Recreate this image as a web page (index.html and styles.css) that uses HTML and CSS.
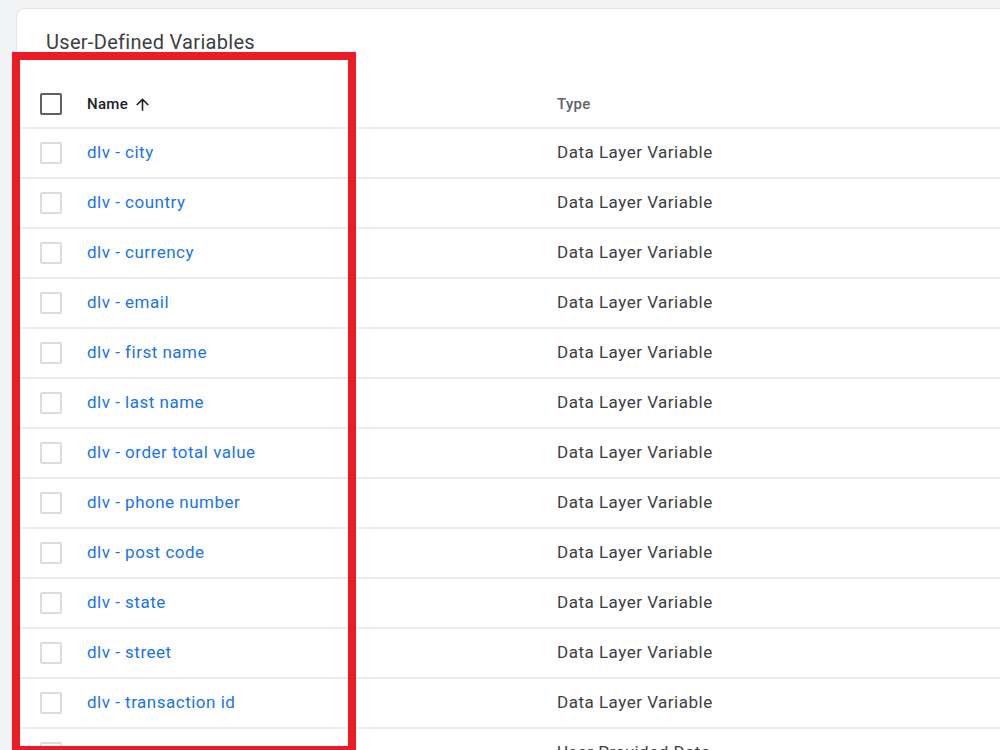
FILE: index.html
```html
<!DOCTYPE html>
<html lang="en">
<head>
  <meta charset="UTF-8">
  <title>User-Defined Variables</title>
  <link rel="stylesheet" href="styles.css">
</head>
<body>
  <div class="card">
    <div class="card-title">User-Defined Variables</div>
    <div class="table">
      <div class="row head">
        <div class="cell check"><span class="box dark"></span></div>
        <div class="cell name">Name
          <svg class="arrow" viewBox="0 0 24 24" width="19" height="19"><path d="M4 12l1.41 1.41L11 7.83V20h2V7.83l5.58 5.59L20 12l-8-8-8 8z" fill="#202124"/></svg>
        </div>
        <div class="cell type">Type</div>
      </div>
      <div class="row"><div class="cell check"><span class="box"></span></div><div class="cell name"><a>dlv - city</a></div><div class="cell type">Data Layer Variable</div></div>
      <div class="row"><div class="cell check"><span class="box"></span></div><div class="cell name"><a>dlv - country</a></div><div class="cell type">Data Layer Variable</div></div>
      <div class="row"><div class="cell check"><span class="box"></span></div><div class="cell name"><a>dlv - currency</a></div><div class="cell type">Data Layer Variable</div></div>
      <div class="row"><div class="cell check"><span class="box"></span></div><div class="cell name"><a>dlv - email</a></div><div class="cell type">Data Layer Variable</div></div>
      <div class="row"><div class="cell check"><span class="box"></span></div><div class="cell name"><a>dlv - first name</a></div><div class="cell type">Data Layer Variable</div></div>
      <div class="row"><div class="cell check"><span class="box"></span></div><div class="cell name"><a>dlv - last name</a></div><div class="cell type">Data Layer Variable</div></div>
      <div class="row"><div class="cell check"><span class="box"></span></div><div class="cell name"><a>dlv - order total value</a></div><div class="cell type">Data Layer Variable</div></div>
      <div class="row"><div class="cell check"><span class="box"></span></div><div class="cell name"><a>dlv - phone number</a></div><div class="cell type">Data Layer Variable</div></div>
      <div class="row"><div class="cell check"><span class="box"></span></div><div class="cell name"><a>dlv - post code</a></div><div class="cell type">Data Layer Variable</div></div>
      <div class="row"><div class="cell check"><span class="box"></span></div><div class="cell name"><a>dlv - state</a></div><div class="cell type">Data Layer Variable</div></div>
      <div class="row"><div class="cell check"><span class="box"></span></div><div class="cell name"><a>dlv - street</a></div><div class="cell type">Data Layer Variable</div></div>
      <div class="row"><div class="cell check"><span class="box"></span></div><div class="cell name"><a>dlv - transaction id</a></div><div class="cell type">Data Layer Variable</div></div>
      <div class="row"><div class="cell check"><span class="box"></span></div><div class="cell name"><a>User Provided Data</a></div><div class="cell type">User Provided Data</div></div>
    </div>
  </div>
  <div class="highlight"></div>
</body>
</html>
```

FILE: styles.css
```css
body {
  margin: 0;
  background: #f1f3f4;
  font-family: Roboto, "Liberation Sans", sans-serif;
  overflow: hidden;
  height: 750px;
}

.card {
  margin: 8px 0 0 16px;
  background: #fff;
  border: 1px solid #e3e5e8;
  border-right: none;
  border-radius: 8px 0 0 0;
  height: 900px;
}

.card-title {
  padding: 21px 0 0 29px;
  height: 49px;
  box-sizing: border-box;
  font-size: 20px;
  color: #3c4043;
  letter-spacing: 0.3px;
}

.table {
  margin-top: 23px;
}

.row {
  display: grid;
  grid-template-columns: 70px 470px 1fr;
  height: 50px;
  align-items: center;
  border-bottom: 2px solid #ededed;
  box-sizing: border-box;
}

.row .name,
.row .type {
  padding-bottom: 2px;
}

.cell.check {
  padding-left: 23px;
  display: flex;
}

.box {
  width: 18px;
  height: 18px;
  border: 2px solid #dcdcdc;
  border-radius: 2px;
}

.box.dark {
  border-color: #616161;
}

.name a {
  color: #1a73e8;
  font-size: 17px;
  letter-spacing: 0.5px;
}

.type {
  color: #3c4043;
  font-size: 17px;
  letter-spacing: 0.5px;
}

.row.head {
  height: 48px;
}

.head .name,
.head .type {
  padding-bottom: 0;
}

.head .name {
  display: flex;
  align-items: center;
  font-size: 15px;
  font-weight: 500;
  color: #202124;
  letter-spacing: 0.3px;
}

.head .arrow {
  margin-left: 5px;
}

.head .type {
  font-size: 15px;
  font-weight: 500;
  color: #5f6368;
  letter-spacing: 0.3px;
}

.highlight {
  position: absolute;
  left: 12px;
  top: 52px;
  width: 344px;
  height: 702px;
  border: 8px solid #ed1c24;
  box-sizing: border-box;
}
```
